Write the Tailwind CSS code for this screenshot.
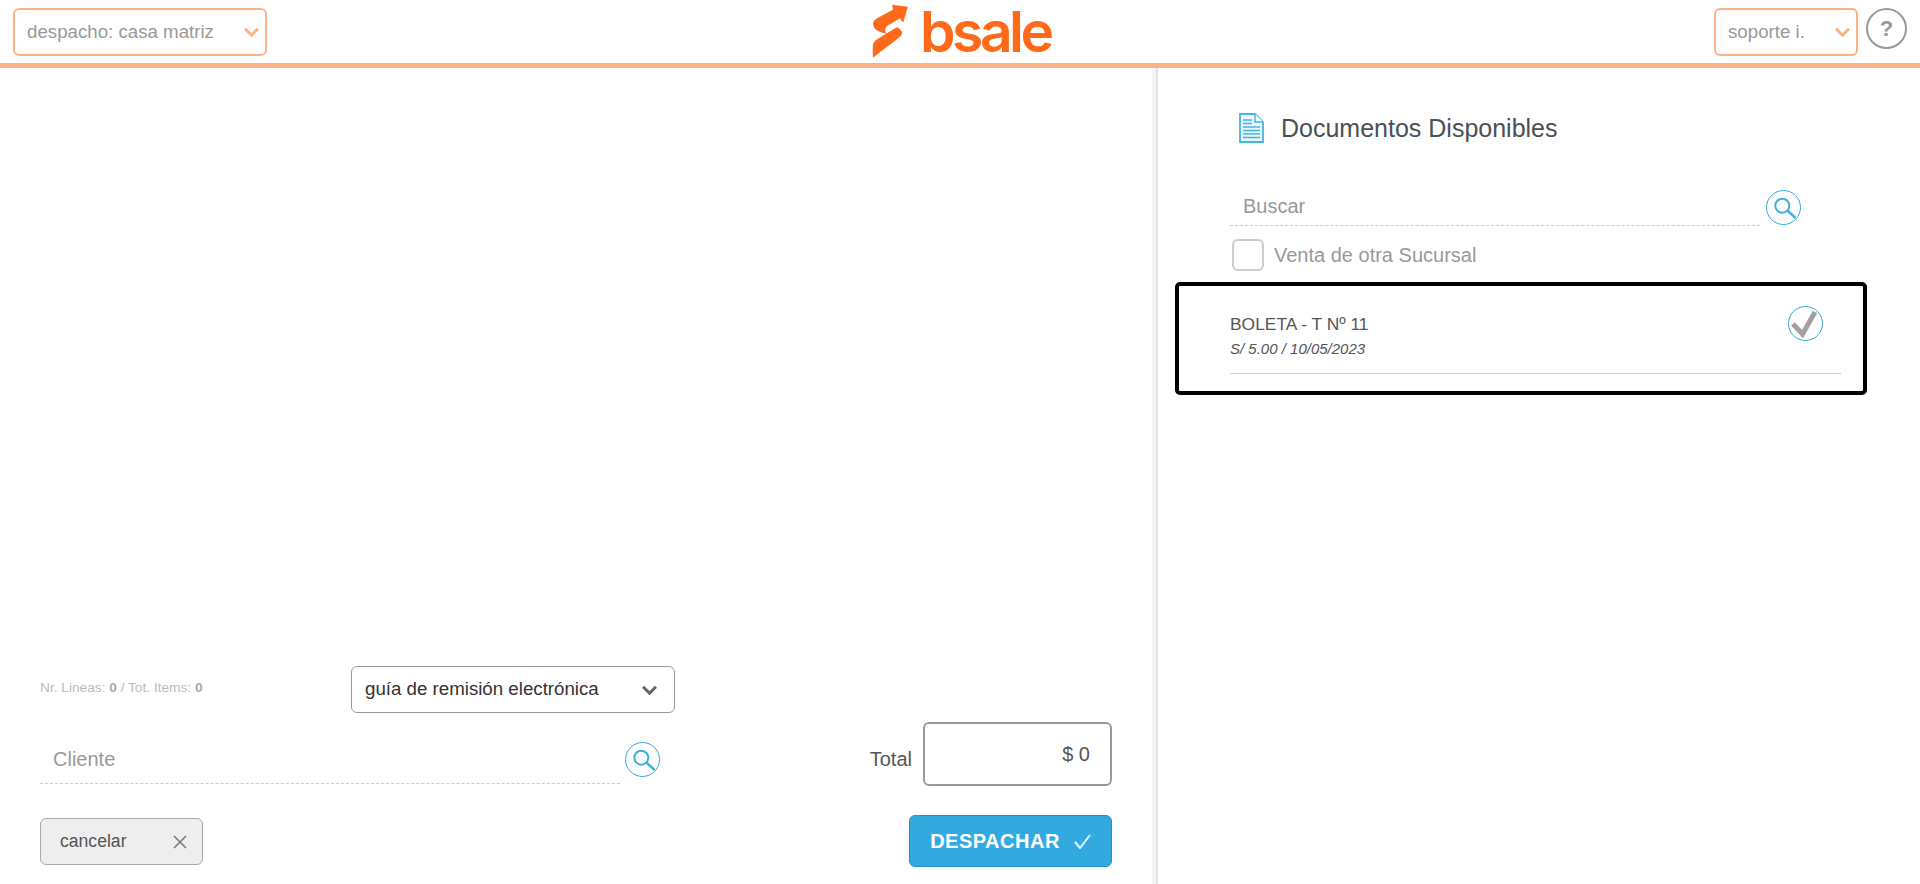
<!DOCTYPE html>
<html lang="es"><head><meta charset="utf-8"><title>bsale</title>
<script src="https://cdn.jsdelivr.net/npm/@tailwindcss/browser@4"></script></head>
<body class="bg-white font-['Liberation_Sans',Arial,sans-serif] overflow-hidden">
<div class="w-[1920px] h-[884px] flex flex-col">
  <header class="h-[68px] shrink-0 border-b-[5px] border-[#ffb085] flex items-start justify-between relative">
    <div class="mt-2 ml-[13px] w-[254px] h-12 border-2 border-[#ffb085] rounded-md flex items-center justify-between pl-[12px] pr-[6px]">
      <span class="text-[18.700px] text-[#999]">despacho: casa matriz</span>
      <svg width="15" height="10" viewBox="0 0 14 9" fill="none" stroke="#ffb085" stroke-width="2.800"><path d="M1 1.500l6 6 6-6"/></svg>
    </div>
    <div class="absolute left-[872px] top-1 flex items-start">
      <svg width="37" height="54" viewBox="20 12 110 162" fill="#ff6a1a"><path d="M22 72Q24 60 36 54L82 29L80 14L127 20L113 68L103 55L64 79Q56 86 62 101Q26 96 22 72Z"/><path d="M22 136Q24 124 36 117L90 84L95 82Q110 92 110 100Q110 106 102 112L22 173Z"/></svg>
      <span class="ml-[11px] -mt-[8px] font-['Inter',sans-serif] font-semibold text-[57px] leading-[72px] tracking-[-3.500px] text-[#ff6a1a]">bsale</span>
    </div>
    <div class="flex items-start mt-2 mr-[13px]">
      <div class="w-[144px] h-12 border-2 border-[#ffb085] rounded-md flex items-center justify-between pl-[12px] pr-[6px]">
        <span class="text-[18.700px] text-[#999]">soporte i.</span>
        <svg width="15" height="10" viewBox="0 0 14 9" fill="none" stroke="#ffb085" stroke-width="2.800"><path d="M1 1.500l6 6 6-6"/></svg>
      </div>
      <div class="ml-2 w-[41px] h-[41px] rounded-full border-2 border-[#999] flex items-center justify-center text-[22px] font-bold text-[#999]">?</div>
    </div>
  </header>
  <main class="flex flex-1 min-h-0">
    <section class="w-[1152px] flex flex-col justify-end pl-10 pr-10 pb-[17px]">
      <div class="flex items-start">
        <p class="w-[311px] mt-[12px] text-[13.700px] text-[#bbb]">Nr. Lineas: <b class="text-[#aaa]">0</b> / Tot. Items: <b class="text-[#aaa]">0</b></p>
        <div class="w-[324px] h-[47px] border border-[#999] rounded-md flex items-center justify-between pl-[13px] pr-[17px]">
          <span class="text-[18.700px] text-[#333]">guía de remisión electrónica</span>
          <svg width="15" height="10" viewBox="0 0 14 9" fill="none" stroke="#666" stroke-width="2.800"><path d="M1 1.500l6 6 6-6"/></svg>
        </div>
      </div>
      <div class="flex items-start mt-[9px]">
        <div class="flex items-start flex-1">
          <div class="w-[580px] h-[48px] mt-[14px] border-b border-dashed border-[#ccc] pl-[13px] text-xl text-[#999] leading-[46px]">Cliente</div>
          <div class="ml-[5px] mt-5 w-[35px] h-[35px] rounded-full border border-[#33aadd] flex items-center justify-center">
            <svg width="24" height="24" viewBox="0 0 24 24" fill="none" stroke="#3db0de" stroke-width="2"><circle cx="10.300" cy="9.700" r="7"/><path d="M15.500 14.500l8 7.500" stroke-width="2.400"/></svg>
          </div>
        </div>
        <span class="mt-[23px] mr-[11px] text-xl text-[#555]">Total</span>
        <div class="w-[189px] h-16 border-2 border-[#999] rounded-md flex items-center justify-end pr-[20px] text-xl text-[#555]">$ 0</div>
      </div>
      <div class="flex items-end justify-between mt-[29px]">
        <div class="w-[163px] h-[47px] mb-[2px] bg-[#eee] border border-[#aaa] rounded-md flex items-center justify-between pl-[19px] pr-[15px]">
          <span class="text-[17.600px] text-[#555]">cancelar</span>
          <svg width="14" height="14" viewBox="0 0 14 14" fill="none" stroke="#777" stroke-width="1.500"><path d="M1 1l12 12M13 1L1 13"/></svg>
        </div>
        <div class="w-[203px] h-[52px] bg-[#33aadf] border border-[#2a90c8] rounded-md flex items-center justify-center gap-[14px] text-xl font-bold tracking-[0.5px] text-white">
          <span>DESPACHAR</span>
          <svg width="17" height="15" viewBox="0 0 17 15" fill="none" stroke="#e4f4fb" stroke-width="2"><path d="M1 8l5 6L16 1"/></svg>
        </div>
      </div>
    </section>
    <div class="w-[4px] bg-[#f4f4f6]"></div>
    <div class="w-[2px] bg-[#e2e2e2]"></div>
    <aside class="flex-1 relative">
      <div class="flex items-center ml-[81px] mt-[44px]">
        <svg width="25" height="30" viewBox="0 0 25 30" fill="none"><path d="M1 1h15l8 8v20H1z" fill="#eaf7fc" stroke="#45b5e2" stroke-width="1.800"/><path d="M16 1v8h8" fill="#fff" stroke="#45b5e2" stroke-width="1.500"/><path d="M4 7h9M4 10.500h9M4 14h17M4 17.500h17M4 21h17M4 24.500h17" stroke="#45b5e2" stroke-width="1.500"/></svg>
        <h1 class="ml-[17px] text-[25px] leading-8 font-normal text-[#4a5058]">Documentos Disponibles</h1>
      </div>
      <div class="flex items-start ml-[72px] mt-[33px]">
        <div class="w-[530px] h-[49px] border-b border-dashed border-[#ccc] pl-[13px] text-xl text-[#999] leading-[58px]">Buscar</div>
        <div class="ml-[6px] w-[35px] h-[35px] mt-[13px] rounded-full border border-[#33aadd] flex items-center justify-center">
          <svg width="24" height="24" viewBox="0 0 24 24" fill="none" stroke="#3db0de" stroke-width="2"><circle cx="10.300" cy="9.700" r="7"/><path d="M15.500 14.500l8 7.500" stroke-width="2.400"/></svg>
        </div>
      </div>
      <label class="flex items-center ml-[74px] mt-[13px]">
        <span class="w-8 h-8 border-2 border-[#ccc] rounded-md"></span>
        <span class="ml-[10px] text-xl text-[#999]">Venta de otra Sucursal</span>
      </label>
      <div class="absolute left-[17px] top-[214px] w-[692px] h-[113px] border-4 border-black rounded-[5px] pt-[28px] pl-[51px] pr-[22px]">
        <div class="relative h-[60px] border-b border-[#ccc]">
          <p class="text-[17.400px] leading-5 text-[#555]">BOLETA - T Nº 11</p>
          <p class="mt-[7px] text-[15px] italic leading-4 text-[#555]">S/ 5.00 / 10/05/2023</p>
          <div class="absolute right-[18px] -top-2 w-[35px] h-[35px] rounded-full border border-[#33aadd] flex items-center justify-center">
            <svg class="blur-[0.6px]" width="30" height="30" viewBox="0 0 30 30" fill="none" stroke="#a0a0a0" stroke-width="5"><path d="M2 15l9.500 10L24 3"/></svg>
          </div>
        </div>
      </div>
    </aside>
  </main>
</div>
</body></html>
